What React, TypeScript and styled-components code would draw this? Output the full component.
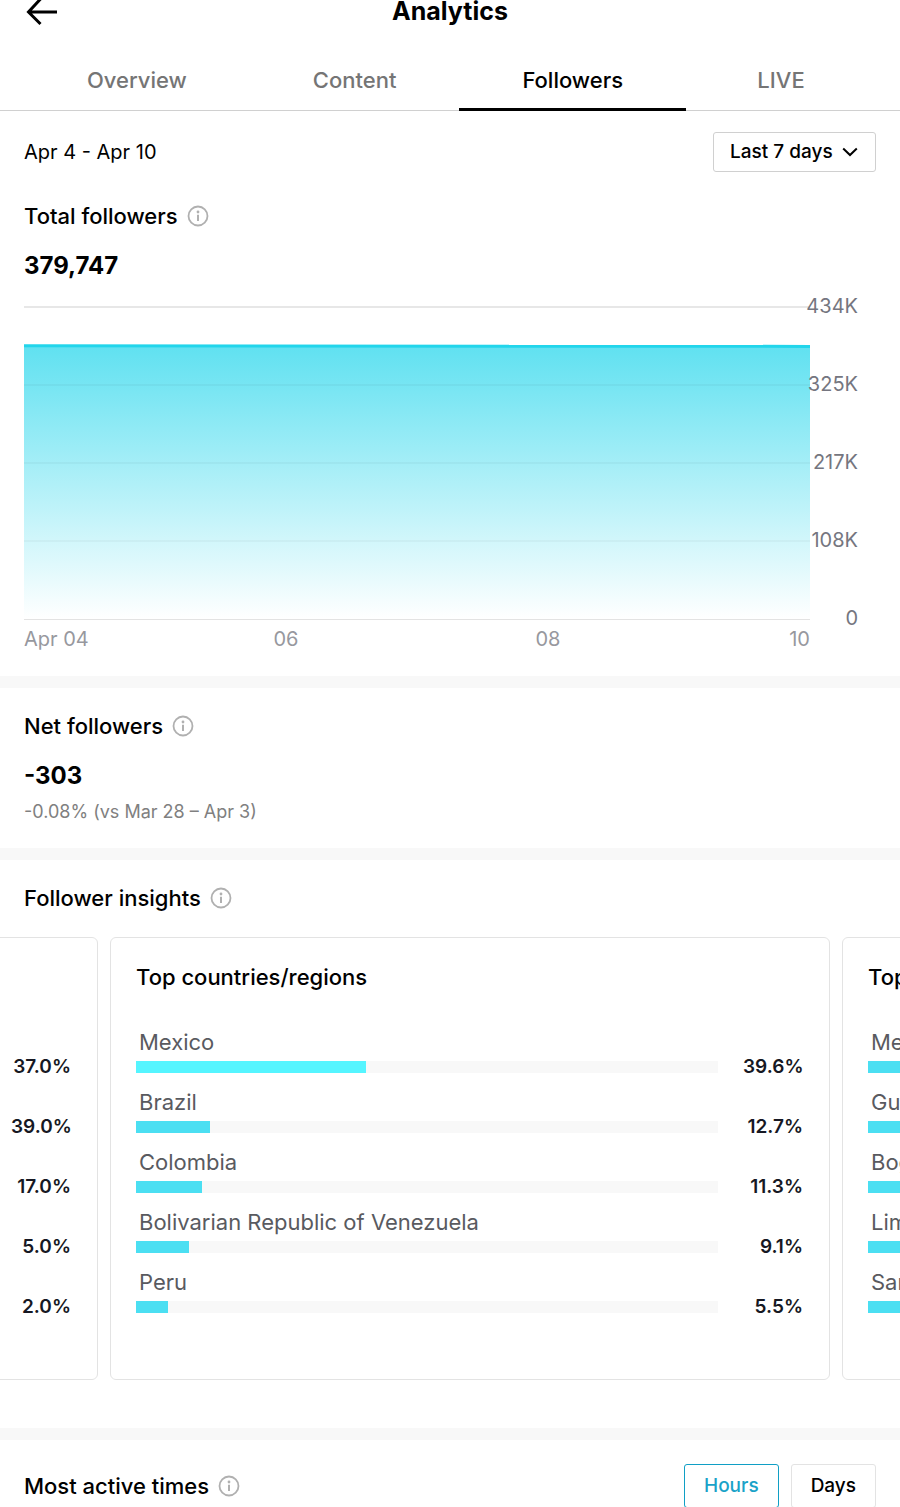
import React, { useLayoutEffect, useRef } from "react";
import styled, { createGlobalStyle } from "styled-components";

const GlobalStyle = createGlobalStyle`
  *, *::before, *::after { box-sizing: border-box; }
  body { margin: 0; background: #fff; }
  button, select { font: inherit; color: inherit; }
  h1, h2, h3, p, ul { margin: 0; padding: 0; }
`;

const Screen = styled.div`
  height: 100vh;
  overflow-x: hidden;
  overflow-y: auto;
  scrollbar-width: none;
  background: #fff;
  color: #000;
  font-family: Inter, "Liberation Sans", sans-serif;
  font-size: 20px;
  line-height: 24px;
`;

const Header = styled.header`
  display: grid;
  grid-template-columns: 64px 1fr 64px;
  align-items: start;
  height: 50px;
`;

const BackButton = styled.button`
  display: flex;
  border: 0;
  padding: 0 0 0 26px;
  background: none;
  cursor: pointer;
`;

const PageTitle = styled.h1`
  font-size: 25px;
  line-height: 22px;
  font-weight: 700;
  text-align: center;
`;

const TabList = styled.nav`
  display: flex;
  height: 61px;
  padding: 0 24px;
  border-bottom: 1px solid #d0d0d0;
`;

const Tab = styled.button<{ $active?: boolean }>`
  flex: 1 1 auto;
  min-width: 190px;
  height: 61px;
  padding: 2px 0 0;
  border: 0;
  border-bottom: 3px solid ${(p) => (p.$active ? "#000" : "transparent")};
  background: none;
  color: ${(p) => (p.$active ? "#000" : "#757575")};
  font-size: 22px;
  font-weight: 500;
  cursor: pointer;
`;

const Section = styled.section`
  padding: 24px;
  border-bottom: 12px solid #f8f8f8;
`;

const FollowersSection = styled(Section)`
  padding-top: 21px;
`;

const InsightsSection = styled(Section)`
  padding-bottom: 48px;
`;

const TimesSection = styled.section`
  display: flex;
  align-items: center;
  justify-content: space-between;
  padding: 24px 24px 0;
`;

const SpacedRow = styled.div`
  display: flex;
  align-items: center;
  justify-content: space-between;
  margin-bottom: 30px;
`;

const SelectBox = styled.label`
  display: grid;
  grid-template-columns: 1fr 33px;
  align-items: center;
  width: 163px;
  height: 40px;
  border: 1px solid #d0d0d0;
  border-radius: 3px;
  svg { grid-area: 1 / 2; pointer-events: none; }
`;

const RangeSelect = styled.select`
  grid-area: 1 / 1 / 2 / 3;
  appearance: none;
  height: 38px;
  padding: 0 0 0 16px;
  border: 0;
  background: none;
  font-size: 19px;
  font-weight: 500;
`;

const TitleRow = styled.div`
  display: flex;
  align-items: center;
  gap: 9px;
`;

const SectionTitle = styled.h2`
  font-size: 22px;
  line-height: 28px;
  font-weight: 500;
`;

const InfoButton = styled.button`
  display: flex;
  padding: 0;
  border: 0;
  background: none;
  cursor: pointer;
`;

const Figure = styled.p`
  margin-top: 20px;
  font-size: 24px;
  line-height: 32px;
  font-weight: 700;
`;

const Comparison = styled.p`
  margin-top: 8px;
  color: #808080;
  font-size: 18px;
`;

const Chart = styled.div`
  display: grid;
  grid-template-columns: 1fr 48px;
  margin: 24px 18px 0 0;
`;

const Plot = styled.svg`
  display: block;
  width: 100%;
  height: 314px;
`;

const YAxis = styled.div`
  display: flex;
  flex-direction: column;
  align-items: flex-end;
  justify-content: space-between;
  height: 336px;
  margin: -12px 0 -22px;
  color: #757680;
`;

const XAxis = styled.div`
  display: flex;
  justify-content: space-between;
  margin: 7px 0 1px;
  color: #97989e;
`;

const XTick = styled.span<{ $align: string }>`
  display: flex;
  justify-content: ${(p) => p.$align};
  width: 0;
  white-space: nowrap;
`;

const Carousel = styled.div`
  display: flex;
  gap: 12px;
  margin: 25px -24px 0;
  padding: 0 24px;
  overflow-x: auto;
  scrollbar-width: none;
`;

const Card = styled.article`
  flex: 0 0 80vw;
  min-width: 0;
  min-height: 443px;
  padding: 25px 26px 0 25px;
  border: 1px solid #e3e3e3;
  border-radius: 6px;
`;

const CardTitle = styled.h3`
  height: 28px;
  margin-bottom: 37px;
  font-size: 22px;
  line-height: 28px;
  font-weight: 500;
`;

const BarList = styled.ul`
  list-style: none;
`;

const BarRow = styled.li`
  display: grid;
  grid-template-columns: 1fr 60px;
  grid-template-rows: 28px 12px;
  gap: 5px 25px;
  height: 60px;
`;

const BarLabel = styled.span`
  grid-column: 1 / 3;
  padding-left: 3px;
  color: #595a60;
  font-size: 22px;
  line-height: 28px;
`;

const Track = styled.div`
  background: #f8f8f8;
`;

const Fill = styled.div<{ $bright?: boolean }>`
  height: 12px;
  background: ${(p) => (p.$bright ? "#55f5ff" : "#4bdff2")};
`;

const Percent = styled.span`
  color: #161823;
  font-size: 19px;
  font-weight: 600;
  line-height: 11px;
  text-align: right;
  white-space: nowrap;
`;

const ToggleGroup = styled.div`
  display: flex;
  gap: 12px;
`;

const Toggle = styled.button<{ $active?: boolean }>`
  height: 44px;
  padding: 0 19px;
  border: 1px solid ${(p) => (p.$active ? "#109fc5" : "#e3e3e3")};
  border-radius: 3px;
  background: #fff;
  color: ${(p) => (p.$active ? "#1aa2c8" : "#000")};
  font-size: 19px;
  font-weight: 500;
  cursor: pointer;
`;

function InfoIcon() {
  return (
    <svg width="22" height="22" viewBox="0 0 22 22" fill="none" aria-hidden="true">
      <circle cx="11" cy="11" r="9.5" stroke="#b0b0b0" strokeWidth="1.8" />
      <circle cx="11" cy="7" r="1.4" fill="#b0b0b0" />
      <path d="M11 9.8v6.2" stroke="#b0b0b0" strokeWidth="2" />
    </svg>
  );
}

function Heading({ children }: { children: string }) {
  return (
    <TitleRow>
      <SectionTitle>{children}</SectionTitle>
      <InfoButton type="button">
        <InfoIcon />
      </InfoButton>
    </TitleRow>
  );
}

type Item = { label?: string; value?: number; share: number };

const ages: Item[] = [37, 39, 17, 5, 2].map((n) => ({ value: n, share: n }));

const countries: Item[] = [
  { label: "Mexico", value: 39.6, share: 39.6 },
  { label: "Brazil", value: 12.7, share: 12.7 },
  { label: "Colombia", value: 11.3, share: 11.3 },
  { label: "Bolivarian Republic of Venezuela", value: 9.1, share: 9.1 },
  { label: "Peru", value: 5.5, share: 5.5 },
];

const cities: Item[] = [
  { label: "Mexico City", share: 12 },
  { label: "Guayaquil", share: 10 },
  { label: "Bogota", share: 9 },
  { label: "Lima", share: 8 },
  { label: "Santiago", share: 7 },
];

function InsightCard({ title, items, highlight }: { title?: string; items: Item[]; highlight?: boolean }) {
  return (
    <Card>
      {title ? <CardTitle>{title}</CardTitle> : <CardTitle as="div" />}
      <BarList>
        {items.map((item, i) => (
          <BarRow key={i}>
            <BarLabel>{item.label}</BarLabel>
            <Track>
              <Fill $bright={highlight && i === 0} style={{ width: `${item.share}%` }} />
            </Track>
            {item.value !== undefined && <Percent>{item.value.toFixed(1)}%</Percent>}
          </BarRow>
        ))}
      </BarList>
    </Card>
  );
}

function FollowerChart() {
  return (
    <Chart>
      <Plot viewBox="0 0 786 314" preserveAspectRatio="none" role="img">
        <defs>
          <linearGradient id="area" x1="0" y1="0" x2="0" y2="1">
            <stop offset="0" stopColor="#22d5eb" stopOpacity="0.72" />
            <stop offset="1" stopColor="#22d5eb" stopOpacity="0" />
          </linearGradient>
        </defs>
        <path d="M0 1H786" stroke="#e7e7e7" strokeWidth="2" />
        <path d="M0 313.5H786" stroke="#e3e3e3" />
        <path d="M0 40H786V313H0Z" fill="url(#area)" />
        <path d="M0 79H786M0 157H786M0 235H786" stroke="#000" strokeOpacity="0.03" strokeWidth="2" />
        <path d="M0 39.8L786 40.4" stroke="#22d5eb" strokeWidth="3" />
      </Plot>
      <YAxis>
        {["434K", "325K", "217K", "108K", "0"].map((t) => (
          <span key={t}>{t}</span>
        ))}
      </YAxis>
      <XAxis>
        <XTick $align="flex-start">Apr 04</XTick>
        <XTick $align="center">06</XTick>
        <XTick $align="center">08</XTick>
        <XTick $align="flex-end">10</XTick>
      </XAxis>
    </Chart>
  );
}

export default function App() {
  const carousel = useRef<HTMLDivElement>(null);

  // Open on the second card, keeping a strip of its neighbours in view.
  useLayoutEffect(() => {
    const el = carousel.current;
    if (!el) return;
    const card = el.children[1] as HTMLElement;
    el.scrollLeft = card.offsetLeft - el.offsetLeft - 110;
  }, []);

  return (
    <>
      <GlobalStyle />
      <Screen>
        <Header>
          <BackButton type="button">
            <svg width="32" height="26" viewBox="0 0 32 26" fill="none" stroke="#000" strokeWidth="3" aria-hidden="true">
              <path d="M14.5-1L2.5 12L14.5 24M2 12H31" />
            </svg>
          </BackButton>
          <PageTitle>Analytics</PageTitle>
        </Header>
        <TabList>
          <Tab type="button">Overview</Tab>
          <Tab type="button">Content</Tab>
          <Tab type="button" $active>Followers</Tab>
          <Tab type="button">LIVE</Tab>
        </TabList>

        <FollowersSection>
          <SpacedRow>
            <span>Apr 4 - Apr 10</span>
            <SelectBox>
              <RangeSelect defaultValue="7">
                <option value="7">Last 7 days</option>
              </RangeSelect>
              <svg width="16" height="10" viewBox="0 0 16 10" fill="none" stroke="#000" strokeWidth="2" aria-hidden="true">
                <path d="M1.2 1.5L8 8L14.8 1.5" />
              </svg>
            </SelectBox>
          </SpacedRow>
          <Heading>Total followers</Heading>
          <Figure>379,747</Figure>
          <FollowerChart />
        </FollowersSection>

        <Section>
          <Heading>Net followers</Heading>
          <Figure>-303</Figure>
          <Comparison>-0.08% (vs Mar 28 – Apr 3)</Comparison>
        </Section>

        <InsightsSection>
          <Heading>Follower insights</Heading>
          <Carousel ref={carousel}>
            <InsightCard items={ages} />
            <InsightCard title="Top countries/regions" items={countries} highlight />
            <InsightCard title="Top cities" items={cities} />
          </Carousel>
        </InsightsSection>

        <TimesSection>
          <Heading>Most active times</Heading>
          <ToggleGroup>
            <Toggle type="button" $active>Hours</Toggle>
            <Toggle type="button">Days</Toggle>
          </ToggleGroup>
        </TimesSection>
      </Screen>
    </>
  );
}
